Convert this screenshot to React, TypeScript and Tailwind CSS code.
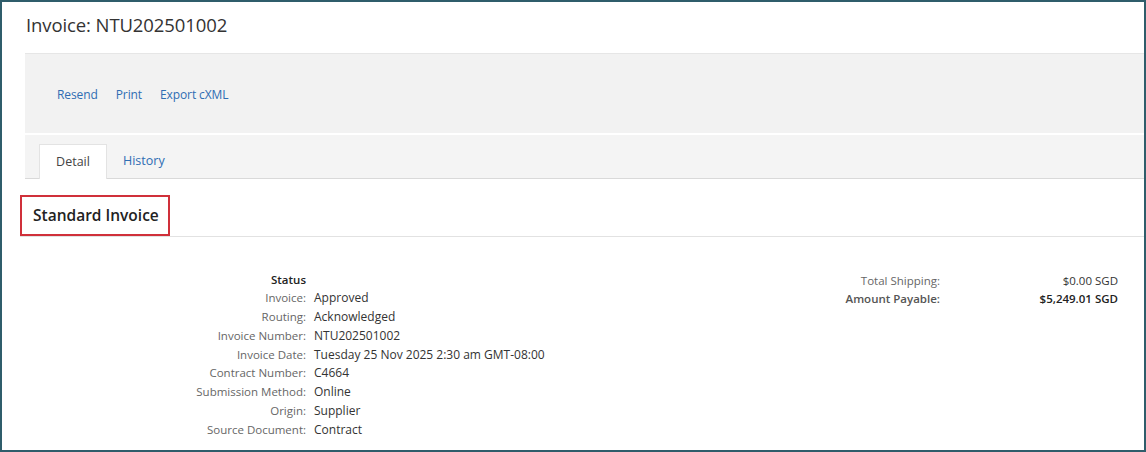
const statusRows: [string, string][] = [
  ["Invoice:", "Approved"],
  ["Routing:", "Acknowledged"],
  ["Invoice Number:", "NTU202501002"],
  ["Invoice Date:", "Tuesday 25 Nov 2025 2:30 am GMT-08:00"],
  ["Contract Number:", "C4664"],
  ["Submission Method:", "Online"],
  ["Origin:", "Supplier"],
  ["Source Document:", "Contract"],
];

export default function App() {
  return (
    <div className="h-[452px] w-[1146px] overflow-hidden bg-white font-['Open_Sans',sans-serif] text-[#333]">
      <div className="flex h-full flex-col border-2 border-[#2f5d6b] pl-[23px]">
        <h1 className="pt-[10px] pl-[1px] text-[18.5px] leading-[26px] tracking-[-0.1px] text-[#333]">
          Invoice: NTU202501002
        </h1>

        {/* action bar */}
        <div className="mt-[15px] flex h-[80px] items-center gap-[18px] border-t border-[#e6e6e6] bg-[#f2f2f2] pl-[32px] pt-[3px] text-[12px] tracking-[-0.1px] text-[#2f6db3]">
          <span>Resend</span>
          <span>Print</span>
          <span>Export cXML</span>
        </div>

        {/* tabs */}
        <div className="mt-[2px] flex h-[44px] items-end border-b border-[#d9d9d9] bg-[#f4f4f4] pl-[14px] text-[12.5px]">
          <div className="-mb-px flex h-[35px] w-[68px] items-center justify-center border border-b-0 border-[#e3e3e3] bg-white text-[#444]">
            Detail
          </div>
          <div className="flex h-[34px] items-center pl-[16px] text-[#2f6db3]">History</div>
        </div>

        {/* section header */}
        <div className="relative ml-[-5px] mt-[16px] h-[42px] border-b border-[#e2e2e2]">
          <div className="absolute left-0 top-0 flex h-[41px] w-[150px] items-center border-2 border-[#d0303a] pl-[11px] text-[15.5px] font-semibold text-[#222]">
            Standard Invoice
          </div>
        </div>

        {/* details */}
        <div className="mt-[34px] flex text-[12px] leading-[18.85px]">
          <div className="grid w-[780px] grid-cols-[281px_1fr] gap-x-[8px]">
            <div className="text-right text-[11.5px] font-semibold leading-[18px] text-[#222]">Status</div>
            <div />
            {statusRows.map(([label, value]) => (
              <div key={label} className="contents">
                <div className="text-right text-[11.5px] text-[#666]">{label}</div>
                <div className="text-[#333]">{value}</div>
              </div>
            ))}
          </div>
          <div className="grid w-[313px] grid-cols-[135px_1fr] content-start gap-x-[8px] pt-[1px] text-[11.5px] leading-[18px]">
            <div className="text-right text-[#666]">Total Shipping:</div>
            <div className="text-right text-[#333]">$0.00 SGD</div>
            <div className="text-right font-semibold text-[#555]">Amount Payable:</div>
            <div className="text-right font-semibold text-[#222]">$5,249.01 SGD</div>
          </div>
        </div>
      </div>
    </div>
  );
}
